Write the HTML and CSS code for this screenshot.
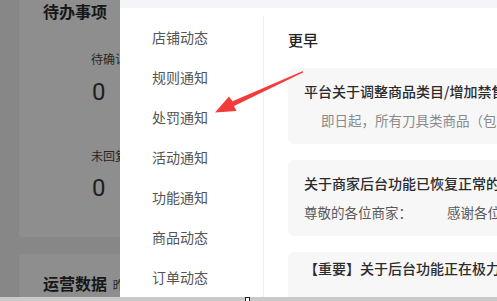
FILE: index.html
```html
<!DOCTYPE html>
<html lang="zh-CN">
<head>
<meta charset="utf-8">
<title>消息中心</title>
<link rel="stylesheet" href="styles.css">
</head>
<body>
<div class="screen">
  <div class="main">
    <div class="page">
      <section class="panel panel-todo">
        <h2 class="panel-title">待办事项</h2>
        <div class="stat">
          <div class="stat-label">待确认订单</div>
          <div class="stat-value">0</div>
        </div>
        <div class="stat stat-second">
          <div class="stat-label">未回复消息</div>
          <div class="stat-value">0</div>
        </div>
      </section>
      <section class="panel panel-data">
        <h2 class="panel-title">运营数据 <span class="panel-sub">昨日</span></h2>
      </section>
    </div>
    <div class="drawer">
      <div class="drawer-top"></div>
      <div class="drawer-body">
        <nav class="menu">
          <div class="menu-item">店铺动态</div>
          <div class="menu-item">规则通知</div>
          <div class="menu-item">处罚通知</div>
          <div class="menu-item">活动通知</div>
          <div class="menu-item">功能通知</div>
          <div class="menu-item">商品动态</div>
          <div class="menu-item">订单动态</div>
          <div class="menu-item active" aria-hidden="true"></div>
        </nav>
        <div class="content">
          <h3 class="group-title">更早</h3>
          <div class="notice">
            <div class="notice-title">平台关于调整商品类目/增加禁售商品的公告</div>
            <div class="notice-desc indent">即日起，所有刀具类商品（包括厨房刀具）</div>
          </div>
          <div class="notice">
            <div class="notice-title">关于商家后台功能已恢复正常的通知</div>
            <div class="notice-desc dark">尊敬的各位商家：<span class="gap">感谢各位商家的耐心等待</span></div>
          </div>
          <div class="notice notice-top">
            <div class="notice-title">【重要】关于后台功能正在极力修复的说明</div>
          </div>
        </div>
      </div>
    </div>
  </div>
  <div class="bottom-bar"><span class="bar-mark"></span></div>
  <svg class="arrow" width="497" height="301" viewBox="0 0 497 301">
    <polygon points="303,71 232.5,101.3 229,96.5 215,112.5 236.5,111 234,106 303,72.5" fill="#f43b3b"/>
  </svg>
</div>
</body>
</html>
```
FILE: styles.css
```css
* { box-sizing: border-box; margin: 0; padding: 0; }
html, body { width: 497px; height: 301px; overflow: hidden; background: #fff; }
body {
  font-family: "Noto Sans CJK SC", "Noto Sans", sans-serif;
  color: #333;
}
.screen { position: relative; width: 497px; height: 301px; display: flex; flex-direction: column; }
.main { display: flex; height: 297px; }

/* dimmed page behind the drawer */
.page {
  width: 120px;
  flex: none;
  overflow: hidden;
  background: #878787;
  padding-left: 19px;
}
.panel {
  width: 300px;
  background: #8e8e8e;
  border-radius: 4px;
  padding-left: 24px;
}
.panel-todo { height: 237px; border-top-left-radius: 0; }
.panel-data { margin-top: 17px; padding-top: 18px; height: 60px; }
.panel-title {
  font-size: 16px;
  line-height: 22px;
  font-weight: 700;
  color: #171717;
  white-space: nowrap;
}
.panel-sub { font-size: 12px; font-weight: 400; color: #262626; margin-left: 2px; }
.stat { padding-left: 48px; margin-top: 29px; white-space: nowrap; }
.stat-second { margin-top: 41px; }
.stat-label { font-size: 12px; line-height: 16px; color: #262626; }
.stat-value {
  margin-top: 10px;
  font-family: "Roboto", "Noto Sans", sans-serif;
  font-size: 24px;
  line-height: 30px;
  color: #1e1e1e;
  padding-left: 1px;
}
.stat-second .stat-value { margin-top: 9px; }

/* drawer */
.drawer { flex: 1; display: flex; flex-direction: column; background: #fff; overflow: hidden; }
.drawer-top { height: 8px; background: #f4f5f9; flex: none; }
.drawer-body { flex: 1; display: flex; padding-top: 8px; }
.menu {
  width: 144px;
  flex: none;
  border-right: 1px solid #eceef2;
  padding-top: 1px;
}
.menu-item {
  margin-left: 16px;
  width: 120px;
  height: 40px;
  line-height: 40px;
  padding-left: 16px;
  font-size: 14px;
  color: #555;
}
.menu-item.active { background: #eef4fc; }

.content { flex: 1; padding: 13px 0 0 24px; min-width: 0; }
.group-title {
  font-size: 15px;
  line-height: 22px;
  font-weight: 500;
  color: #222;
  margin-bottom: 17px;
}
.notice {
  width: 260px;
  height: 76px;
  background: #f7f7f8;
  border-radius: 6px;
  padding: 13px 0 0 16px;
  margin-bottom: 16px;
  white-space: nowrap;
  overflow: hidden;
}
.notice-top { padding-top: 6px; }
.notice-title {
  font-size: 14px;
  line-height: 20px;
  font-weight: 500;
  color: #2b2b2b;
}
.notice-desc {
  margin-top: 9px;
  font-size: 13.5px;
  line-height: 20px;
  color: #8a8a8a;
}
.notice-desc.indent { padding-left: 17px; }
.notice-desc.dark { color: #5a5a5a; }
.gap { margin-left: 35px; }

.bottom-bar {
  position: relative;
  height: 4px;
  background: #c9c9c9;
  flex: none;
}
.bar-mark {
  position: absolute;
  left: 245px;
  top: 0;
  width: 5px;
  height: 4px;
  background: #fff;
  border: 1px solid #222;
  border-bottom: none;
}
.arrow { position: absolute; left: 0; top: 0; pointer-events: none; }
```
